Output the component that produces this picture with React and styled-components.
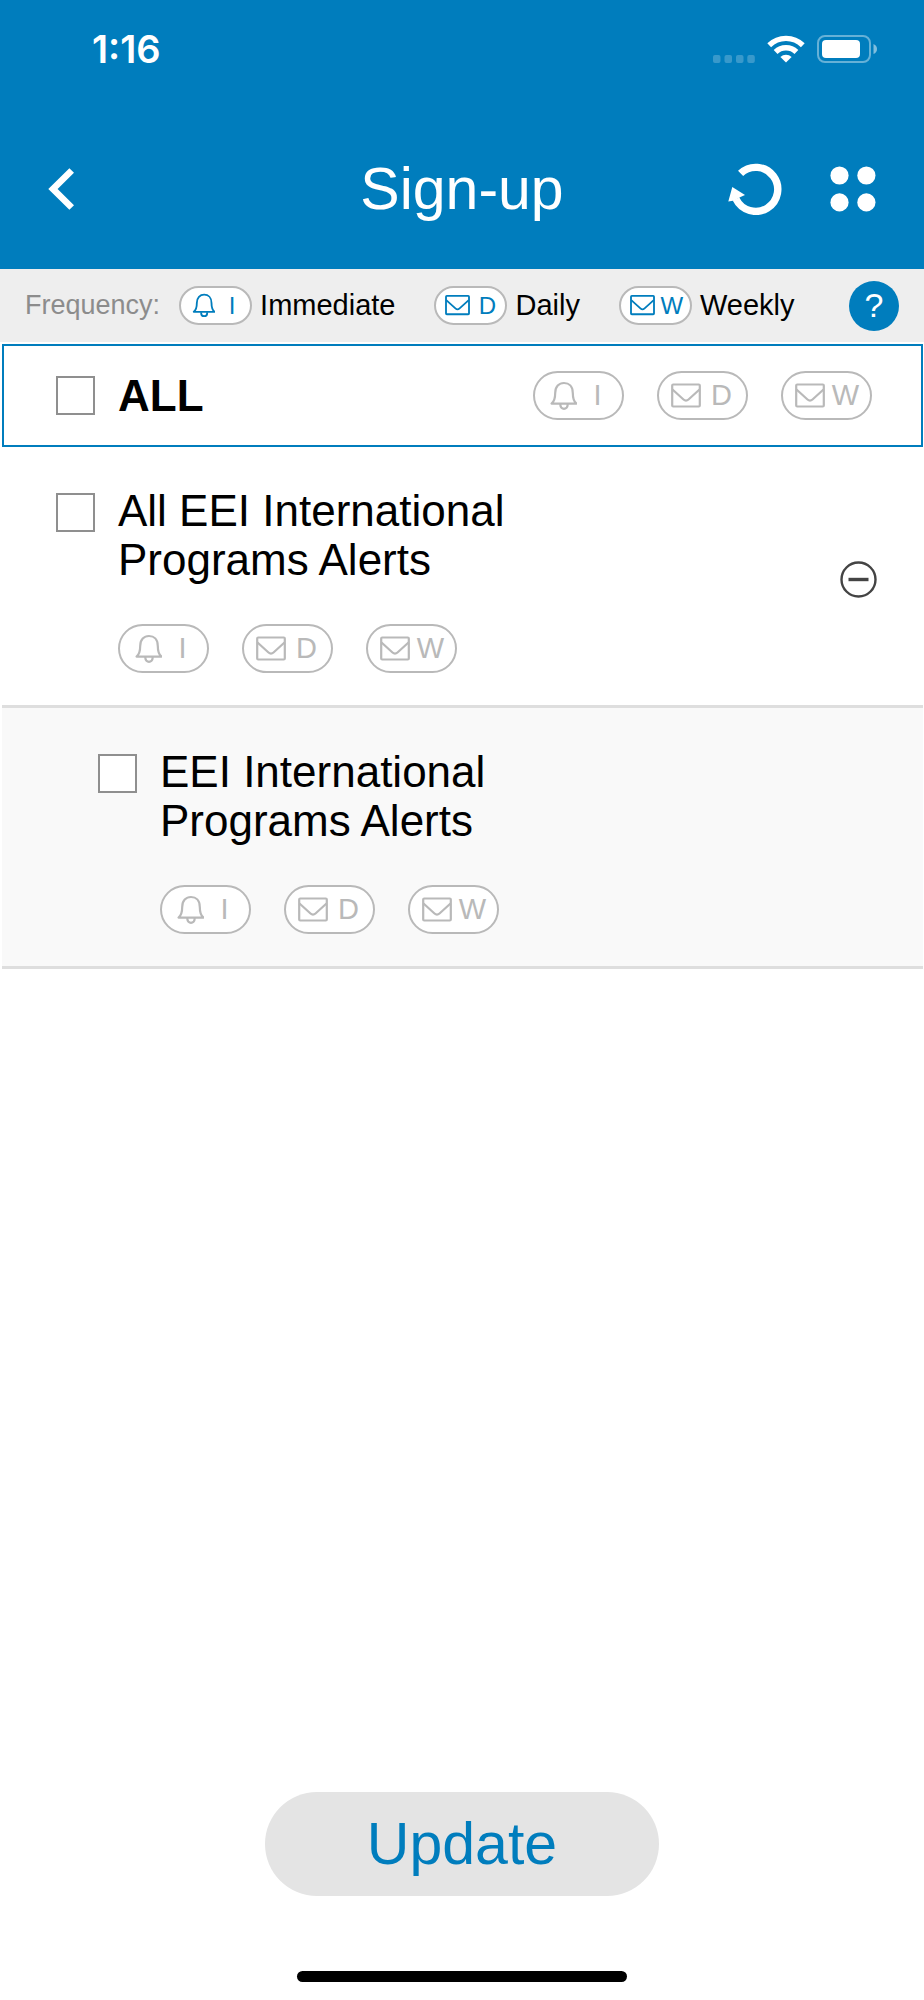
import { useState } from "react";
import styled, { createGlobalStyle, css } from "styled-components";

const blue = "#007dbd";
const outline = "#b9b9b9";

const GlobalStyle = createGlobalStyle`
  *,
  *::before,
  *::after {
    box-sizing: border-box;
  }

  body {
    margin: 0;
    background: #fff;
    color: #000;
    font-family: "Liberation Sans", Arial, sans-serif;
  }

  button {
    border: none;
    padding: 0;
    background: none;
    font-family: inherit;
    cursor: pointer;
  }

  svg {
    display: block;
    flex-shrink: 0;
  }
`;

const Page = styled.div`
  display: flex;
  flex-direction: column;
  min-height: 100vh;
`;

const Header = styled.header`
  background: ${blue};
  color: #fff;
`;

const StatusBar = styled.div`
  display: flex;
  align-items: center;
  justify-content: space-between;
  height: 98px;
  padding: 0 47px 0 92px;
`;

const Time = styled.span`
  font-family: Inter, sans-serif;
  font-size: 38px;
  font-weight: 600;
`;

const StatusIcons = styled.div`
  display: flex;
  align-items: flex-end;
  gap: 12px;
`;

const Nav = styled.nav`
  display: grid;
  grid-template-columns: 1fr auto 1fr;
  align-items: center;
  height: 171px;
  padding: 10px 48px 0;
`;

const Title = styled.h1`
  margin: 0;
  font-size: 59px;
  font-weight: 400;
`;

const NavButton = styled.button`
  color: #fff;
  justify-self: start;
`;

const NavActions = styled.div`
  display: flex;
  align-items: center;
  justify-content: flex-end;
  gap: 48px;
`;

const Legend = styled.div`
  display: flex;
  align-items: center;
  height: 73px;
  padding: 0 25px;
  background: #eee;
`;

const LegendTitle = styled.span`
  margin-right: 19px;
  font-size: 27px;
  color: #8c8c8c;
`;

const LegendItem = styled.span`
  display: flex;
  align-items: center;
  gap: 8px;
  margin-right: 39px;
  font-size: 29px;
`;

const HelpButton = styled.button`
  width: 50px;
  height: 50px;
  margin-left: auto;
  border-radius: 50%;
  background: ${blue};
  color: #fff;
  font-size: 34px;
`;

const pillStyles = css`
  display: flex;
  align-items: center;
  border: 2px solid ${outline};
  background: #fff;
`;

const LegendPill = styled.span`
  ${pillStyles}
  width: 73px;
  height: 39px;
  padding-left: 9px;
  gap: 5px;
  border-radius: 20px;
  color: ${blue};
  font-size: 24px;
`;

const PillButton = styled.button`
  ${pillStyles}
  width: 91px;
  height: 49px;
  padding-left: 12px;
  gap: 6px;
  border-radius: 25px;
  color: ${(props) => (props.$active ? blue : outline)};
  font-size: 29px;
`;

const PillLetter = styled.span`
  width: 1em;
  text-align: center;
`;

const PillGroup = styled.div`
  display: flex;
  gap: 33px;
`;

const List = styled.main`
  flex: 1;
  padding: 2px 1px 0 2px;
`;

const AllRow = styled.div`
  display: flex;
  align-items: center;
  justify-content: space-between;
  height: 103px;
  padding: 0 49px 0 52px;
  border: 2px solid ${blue};
`;

const Row = styled.div`
  display: flex;
  align-items: center;
  justify-content: space-between;
  padding: 39px 46px 32px ${(props) => (props.$nested ? "96px" : "54px")};
  border-bottom: 3px solid #dedede;
  background: ${(props) => (props.$nested ? "#f9f9f9" : "#fff")};
`;

const RowBody = styled.div`
  display: grid;
  grid-template-columns: auto 1fr;
  gap: 40px 23px;
`;

const RowPills = styled(PillGroup)`
  grid-column: 2;
`;

const AllLabel = styled.label`
  display: flex;
  align-items: center;
  gap: 23px;
  font-size: 44px;
  font-weight: 700;
`;

const RowLabel = styled.label`
  max-width: 480px;
  font-size: 44px;
  line-height: 49px;
`;

const Checkbox = styled.input.attrs({ type: "checkbox" })`
  appearance: none;
  width: 39px;
  height: 39px;
  margin: ${(props) => (props.$top ? "7px 0 0" : "0")};
  border: 2px solid #8f8f8f;
  background: #fff;

  &:checked {
    background: ${blue};
  }
`;

const CollapseButton = styled.button`
  color: #444;
`;

const Footer = styled.footer`
  display: flex;
  flex-direction: column;
  align-items: center;
  gap: 75px;
  padding-bottom: 18px;
`;

const UpdateButton = styled.button`
  width: 394px;
  height: 104px;
  border-radius: 52px;
  background: #e4e4e4;
  color: ${blue};
  font-size: 59px;
`;

const HomeIndicator = styled.div`
  width: 330px;
  height: 11px;
  border-radius: 6px;
  background: #000;
`;

const SignalIcon = () => (
  <svg width="42" height="8" viewBox="0 0 42 8" fill="#fff" opacity="0.22">
    <rect x="0" width="7.5" height="8" rx="2" />
    <rect x="11.5" width="7.5" height="8" rx="2" />
    <rect x="23" width="7.5" height="8" rx="2" />
    <rect x="34.3" width="7.5" height="8" rx="2" />
  </svg>
);

const WifiIcon = () => (
  <svg width="38" height="28" viewBox="0 0 38 28">
    <g fill="none" stroke="#fff" strokeWidth="5.4">
      <path d="M2.2 10.2a24 24 0 0 1 33.6 0" />
      <path d="M8.6 17a14.8 14.8 0 0 1 20.8 0" />
    </g>
    <path d="M19 27.6l5.6-5.6a8.2 8.2 0 0 0-11.2 0z" fill="#fff" />
  </svg>
);

const BatteryIcon = () => (
  <svg width="60" height="28" viewBox="0 0 60 28">
    <rect
      x="1"
      y="1"
      width="52"
      height="26"
      rx="7"
      fill="none"
      stroke="#fff"
      strokeWidth="2"
      opacity="0.4"
    />
    <rect x="5" y="5" width="38" height="18" rx="4" fill="#fff" />
    <path d="M56.5 9q3.5 1.5 3.5 5t-3.5 5z" fill="#fff" opacity="0.5" />
  </svg>
);

const BackIcon = () => (
  <svg width="26" height="42" viewBox="0 0 26 42">
    <path
      d="M23.7 2.5L5 21l18.7 18.5"
      fill="none"
      stroke="#fff"
      strokeWidth="6.6"
    />
  </svg>
);

const ReloadIcon = () => (
  <svg width="54" height="52" viewBox="0 0 54 52">
    <path
      d="M12.6 10.4A22 22 0 1 1 8 36"
      fill="none"
      stroke="#fff"
      strokeWidth="7.4"
    />
    <path d="M4.300 24l12.700 8-4.500 2-6 3.500-6.200 1z" fill="#fff" />
  </svg>
);

const MenuIcon = () => (
  <svg width="46" height="46" viewBox="0 0 46 46" fill="currentColor">
    <circle cx="9.5" cy="9.5" r="9.1" />
    <circle cx="36.4" cy="9.5" r="9.1" />
    <circle cx="9.5" cy="36.4" r="9.1" />
    <circle cx="36.4" cy="36.4" r="9.1" />
  </svg>
);

const BellIcon = ({ size }) => (
  <svg
    width={size}
    height={size}
    viewBox="-1 0 30 30"
    fill="none"
    stroke="currentColor"
    strokeWidth="2.2"
    strokeLinejoin="round"
  >
    <path d="M3.500 22.600c2.700-2 3.700-5 3.700-10.600C7.200 5.500 11 2 16 2s8.800 3.500 8.800 10c0 5.600 1 8.600 3.700 10.600z" />
    <path d="M12.400 23v1.200a3.600 3.600 0 0 0 7.200 0v-1.200" />
  </svg>
);

const MailIcon = ({ size }) => (
  <svg
    width={size}
    height={size}
    viewBox="0 0 30 30"
    fill="none"
    stroke="currentColor"
    strokeWidth="2.2"
    strokeLinejoin="round"
  >
    <rect x="1.2" y="3.500" width="27.600" height="22" rx="1" />
    <path d="M1.500 8.500L12.500 18.500q2.500 2.200 5 0L28.500 8.500" />
  </svg>
);

const MinusIcon = () => (
  <svg width="37" height="37" viewBox="0 0 37 37" stroke="currentColor">
    <circle cx="18.5" cy="18.5" r="17" fill="none" strokeWidth="2.4" />
    <path d="M8.5 18.5h20" strokeWidth="3.4" />
  </svg>
);

const frequencies = [
  { letter: "I", name: "Immediate", Icon: BellIcon },
  { letter: "D", name: "Daily", Icon: MailIcon },
  { letter: "W", name: "Weekly", Icon: MailIcon },
];

const programs = [
  { id: "all-eei", title: "All EEI International Programs Alerts" },
  { id: "eei", title: "EEI International Programs Alerts", nested: true },
];

const FrequencyPills = ({ as: Group = PillGroup }) => {
  const [selected, setSelected] = useState(null);

  return (
    <Group>
      {frequencies.map(({ letter, name, Icon }) => (
        <PillButton
          key={letter}
          type="button"
          aria-label={name}
          $active={selected === letter}
          onClick={() => setSelected(letter)}
        >
          <Icon size={30} />
          <PillLetter>{letter}</PillLetter>
        </PillButton>
      ))}
    </Group>
  );
};

const App = () => {
  const [open, setOpen] = useState(true);
  const visible = programs.filter((program) => open || !program.nested);

  return (
    <>
      <GlobalStyle />
      <Page>
        <Header>
          <StatusBar>
            <Time>1:16</Time>
            <StatusIcons>
              <SignalIcon />
              <WifiIcon />
              <BatteryIcon />
            </StatusIcons>
          </StatusBar>
          <Nav>
            <NavButton type="button" aria-label="Back">
              <BackIcon />
            </NavButton>
            <Title>Sign-up</Title>
            <NavActions>
              <NavButton type="button" aria-label="Reload">
                <ReloadIcon />
              </NavButton>
              <NavButton type="button" aria-label="Menu">
                <MenuIcon />
              </NavButton>
            </NavActions>
          </Nav>
        </Header>

        <Legend>
          <LegendTitle>Frequency:</LegendTitle>
          {frequencies.map(({ letter, name, Icon }) => (
            <LegendItem key={letter}>
              <LegendPill>
                <Icon size={25} />
                <PillLetter>{letter}</PillLetter>
              </LegendPill>
              {name}
            </LegendItem>
          ))}
          <HelpButton type="button">?</HelpButton>
        </Legend>

        <List>
          <AllRow>
            <AllLabel>
              <Checkbox />
              ALL
            </AllLabel>
            <FrequencyPills />
          </AllRow>
          {visible.map(({ id, title, nested }) => (
            <Row key={id} $nested={nested}>
              <RowBody>
                <Checkbox id={id} $top />
                <RowLabel htmlFor={id}>{title}</RowLabel>
                <FrequencyPills as={RowPills} />
              </RowBody>
              {!nested && (
                <CollapseButton
                  type="button"
                  aria-label="Collapse"
                  aria-expanded={open}
                  onClick={() => setOpen(!open)}
                >
                  <MinusIcon />
                </CollapseButton>
              )}
            </Row>
          ))}
        </List>

        <Footer>
          <UpdateButton type="button">Update</UpdateButton>
          <HomeIndicator />
        </Footer>
      </Page>
    </>
  );
};

export default App;
